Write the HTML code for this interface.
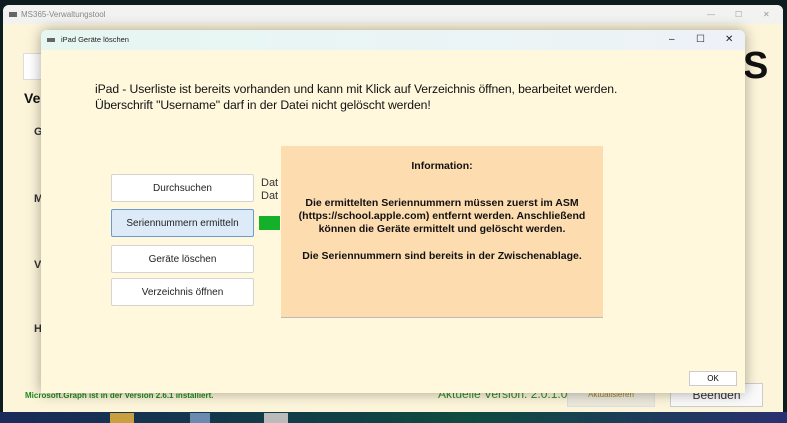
<!DOCTYPE html>
<html><head><meta charset="utf-8"><style>
body{margin:0;width:787px;height:423px;overflow:hidden;background:#0d1c1e;font-family:"Liberation Sans",sans-serif;position:relative}
.a{position:absolute}
.btn{position:absolute;left:111px;width:141px;background:#fff;border:1px solid #d4d4d4;border-radius:2px;font-size:10px;color:#222;display:flex;align-items:center;justify-content:center}
</style></head><body>
<div class="a" style="left:0;top:412px;width:787px;height:11px;background:linear-gradient(90deg,#1a2a5a,#123a4a 30%,#0f4a40 60%,#2a3070)"></div>
<div class="a" style="left:110px;top:413px;width:24px;height:10px;background:#c9a040"></div>
<div class="a" style="left:190px;top:413px;width:20px;height:10px;background:#6a8ab0"></div>
<div class="a" style="left:264px;top:413px;width:24px;height:10px;background:#bbb"></div>
<!-- main window -->
<div class="a" style="left:3px;top:5px;width:780px;height:407px;background:#fdf5da;border-radius:6px 6px 0 0;overflow:hidden">
 <div class="a" style="left:0;top:0;width:780px;height:19px;background:#f2f2f0;font-size:8px;color:#888;line-height:19px"><span style="margin-left:18px">MS365-Verwaltungstool</span>
 <span class="a" style="left:6px;top:7px;width:8px;height:5px;background:#666"></span>
 <span class="a" style="left:704px;color:#999">—</span><span class="a" style="left:732px;color:#999">☐</span><span class="a" style="left:760px;color:#999">✕</span></div>
 <div class="a" style="left:20px;top:48px;width:30px;height:25px;background:#fff;border:1px solid #ddd"></div>
 <div class="a" style="left:21px;top:85px;font-weight:bold;font-size:14px;color:#111">Ve</div>
 <div class="a" style="left:31px;top:121px;font-weight:bold;font-size:11px;color:#333">G</div>
 <div class="a" style="left:31px;top:188px;font-weight:bold;font-size:11px;color:#333">M</div>
 <div class="a" style="left:31px;top:254px;font-weight:bold;font-size:11px;color:#333">V</div>
 <div class="a" style="left:31px;top:318px;font-weight:bold;font-size:11px;color:#333">H</div>
 <div class="a" style="left:740px;top:40px;font-weight:bold;font-size:38px;color:#111">S</div>
 <div class="a" style="left:22px;top:386px;font-size:8px;color:#1f8a1f;font-weight:bold">Microsoft.Graph ist in der Version 2.6.1 installiert.</div>
 <div class="a" style="left:435px;top:382px;font-size:12px;color:#2a8a2a">Aktuelle Version: 2.0.1.0</div>
 <div class="a" style="left:564px;top:378px;width:86px;height:22px;background:#ece8dc;border:1px solid #ddd;font-size:8px;color:#a08020;text-align:center;line-height:22px">Aktualisieren</div>
 <div class="a" style="left:667px;top:378px;width:91px;height:22px;background:#fafafa;border:1px solid #ccc;font-size:12px;color:#333;text-align:center;line-height:22px">Beenden</div>
</div>
<!-- dialog -->
<div class="a" style="left:41px;top:30px;width:704px;height:363px;background:#fff8dc;border-radius:6px 6px 0 0;box-shadow:0 0 14px rgba(0,0,0,.35);overflow:hidden">
 <div class="a" style="left:0;top:0;width:704px;height:20px;background:linear-gradient(90deg,#e6f7f2,#eef2f8);font-size:7.5px;color:#222;line-height:20px"><span style="margin-left:20px">iPad Geräte löschen</span>
 <span class="a" style="left:6px;top:8px;width:8px;height:4px;background:#666"></span>
 <span class="a" style="left:628px;font-size:10px">–</span><span class="a" style="left:655px;font-size:10px">☐</span><span class="a" style="left:684px;font-size:10px">✕</span></div>
 <div class="a" style="left:54px;top:51px;font-size:12.2px;color:#111;line-height:16px;letter-spacing:-0.1px">iPad - Userliste ist bereits vorhanden und kann mit Klick auf Verzeichnis öffnen, bearbeitet werden.<br>Überschrift "Username" darf in der Datei nicht gelöscht werden!</div>
 <div class="a" style="left:220px;top:147px;font-size:11px;color:#333;line-height:13px">Dat<br>Dat</div>
 <div class="a" style="left:218px;top:186px;width:21px;height:14px;background:#15b02a"></div>
 <div class="a" style="left:240px;top:116px;width:322px;height:171px;background:#fddcb0;border-bottom:1px solid #bbb;font-size:10.5px;font-weight:bold;color:#111;text-align:center;line-height:13px">
  <div style="margin-top:14px">Information:</div>
  <div style="margin-top:24px">Die ermittelten Seriennummern müssen zuerst im ASM<br>(https://school.apple.com) entfernt werden. Anschließend<br>können die Geräte ermittelt und gelöscht werden.</div>
  <div style="margin-top:14px">Die Seriennummern sind bereits in der Zwischenablage.</div>
 </div>
 <div class="a" style="left:648px;top:341px;width:46px;height:13px;background:#fff;border:1px solid #ccc;font-size:8px;text-align:center;line-height:13px">OK</div>
</div>
<div class="btn" style="top:174px;height:26px">Durchsuchen</div>
<div class="btn" style="top:209px;height:26px;background:#dcebf7;border-color:#6a9cd0">Seriennummern ermitteln</div>
<div class="btn" style="top:245px;height:26px">Geräte löschen</div>
<div class="btn" style="top:278px;height:26px">Verzeichnis öffnen</div>
</body></html>
